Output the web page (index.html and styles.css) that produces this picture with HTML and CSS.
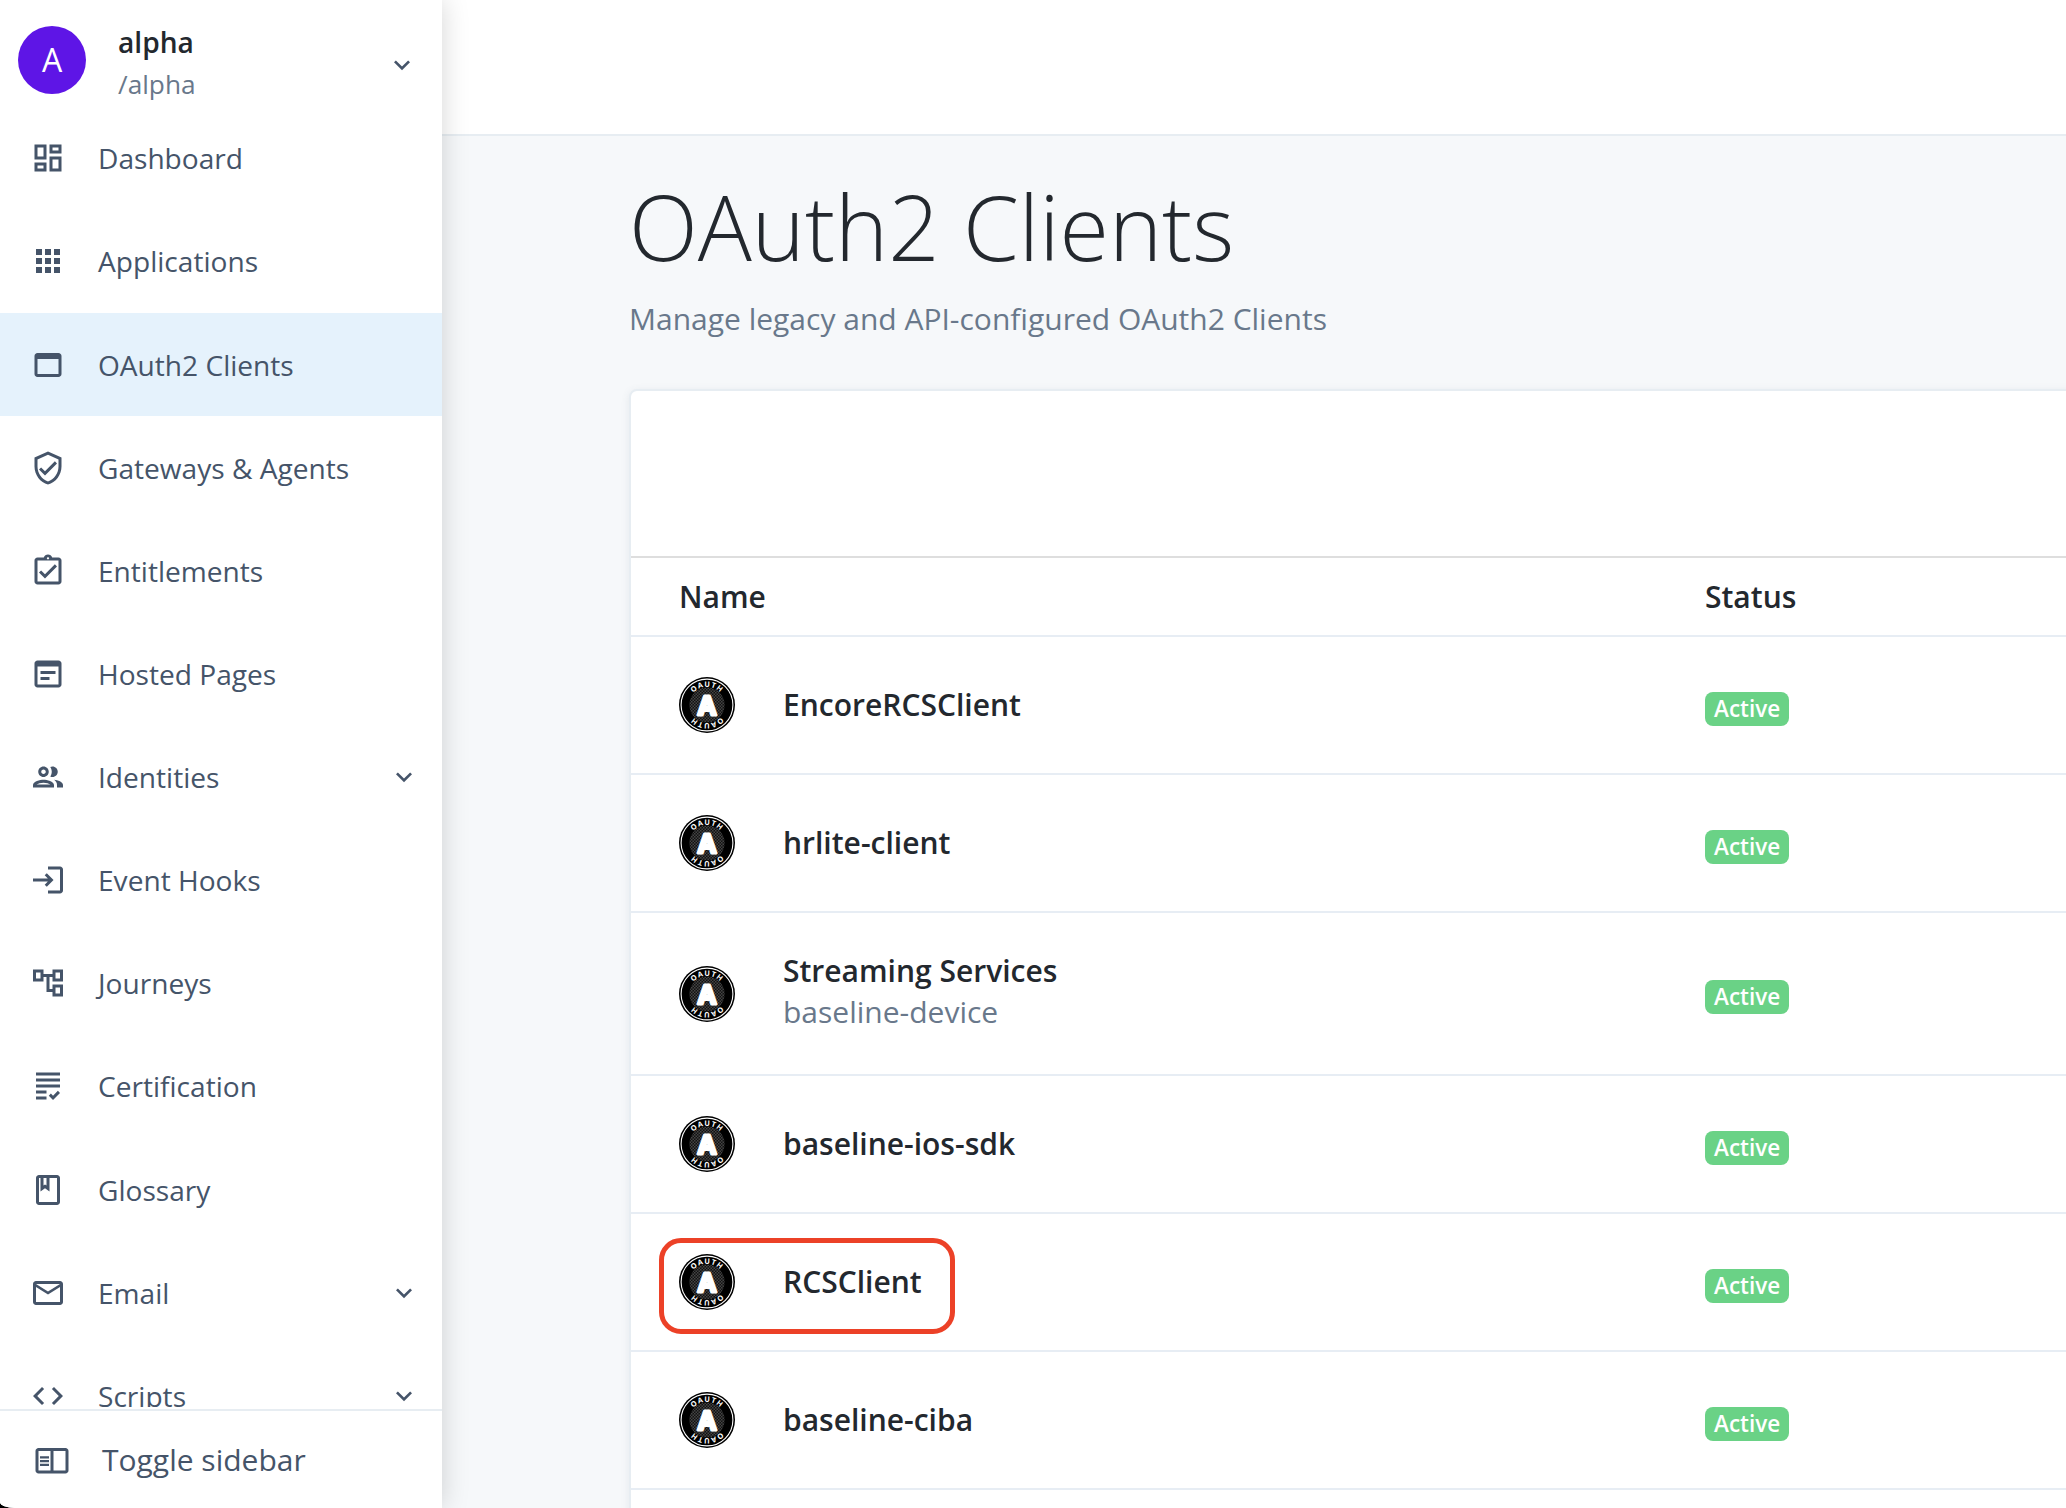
FILE: index.html
```html
<!DOCTYPE html>
<html lang="en">
<head>
<meta charset="utf-8">
<title>OAuth2 Clients</title>
<link rel="stylesheet" href="styles.css">
</head>
<body>
<svg class="defs" width="0" height="0" aria-hidden="true">
  <defs>
    <pattern id="checker" width="3" height="3" patternUnits="userSpaceOnUse">
      <rect width="3" height="3" fill="#111"/>
      <rect width="1.5" height="1.5" fill="#444"/>
      <rect x="1.5" y="1.5" width="1.5" height="1.5" fill="#444"/>
    </pattern>
    <path id="arc" d="M9.8 28a18.2 18.2 0 0 1 36.4 0"/>
    <symbol id="oauth" viewBox="0 0 56 56">
      <circle cx="28" cy="28" r="28" fill="#000"/>
      <circle cx="28" cy="28" r="25.9" fill="none" stroke="#fff" stroke-width="1.1"/>
      <circle cx="28" cy="28" r="17.6" fill="url(#checker)"/>
      <text class="seal-text"><textPath href="#arc" startOffset="50%">OAUTH</textPath></text>
      <g transform="rotate(180 28 28)"><text class="seal-text"><textPath href="#arc" startOffset="50%">OAUTH</textPath></text></g>
      <text class="seal-letter" x="28" y="38.2">A</text>
    </symbol>
    <symbol id="chevron" viewBox="0 0 24 24"><path d="M16.59 8.59 12 13.17 7.41 8.59 6 10l6 6 6-6z"/></symbol>
  </defs>
</svg>
<div class="app">
  <aside class="sidebar">
    <div class="realm">
      <div class="avatar">A</div>
      <div class="realm-text">
        <div class="realm-name">alpha</div>
        <div class="realm-path">/alpha</div>
      </div>
      <svg class="chevron"><use href="#chevron"/></svg>
    </div>
    <nav class="nav">
      <a class="item"><svg class="icon" viewBox="0 0 24 24"><path d="M19 5v2h-4V5h4M9 5v6H5V5h4m10 8v6h-4v-6h4M9 17v2H5v-2h4M21 3h-8v6h8V3zM11 3H3v10h8V3zm10 8h-8v10h8V11zm-10 4H3v6h8v-6z"/></svg><span>Dashboard</span></a>
      <a class="item"><svg class="icon" viewBox="0 0 24 24"><path d="M4 8h4V4H4v4zm6 12h4v-4h-4v4zm-6 0h4v-4H4v4zm0-6h4v-4H4v4zm6 0h4v-4h-4v4zm6-10v4h4V4h-4zm-6 4h4V4h-4v4zm6 6h4v-4h-4v4zm0 6h4v-4h-4v4z"/></svg><span>Applications</span></a>
      <a class="item active"><svg class="icon" viewBox="0 0 24 24"><path d="M19 4H5c-1.11 0-2 .9-2 2v12c0 1.1.89 2 2 2h14c1.1 0 2-.9 2-2V6c0-1.1-.89-2-2-2zm0 14H5V8h14v10z"/></svg><span>OAuth2 Clients</span></a>
      <a class="item"><svg class="icon" viewBox="0 0 24 24"><path d="M12 1 3 5v6c0 5.55 3.84 10.74 9 12 5.16-1.26 9-6.45 9-12V5l-9-4zm7 10c0 4.52-2.98 8.69-7 9.93-4.02-1.24-7-5.41-7-9.93V6.3l7-3.11 7 3.11V11zm-11.59.59L6 13l4 4 8-8-1.41-1.42L10 14.17z"/></svg><span>Gateways &amp; Agents</span></a>
      <a class="item"><svg class="icon" viewBox="0 0 24 24"><path d="M19 3h-4.18C14.4 1.84 13.3 1 12 1s-2.4.84-2.82 2H5c-1.1 0-2 .9-2 2v14c0 1.1.9 2 2 2h14c1.1 0 2-.9 2-2V5c0-1.1-.9-2-2-2zm-7-.25c.41 0 .75.34.75.75s-.34.75-.75.75-.75-.34-.75-.75.34-.75.75-.75zM19 19H5V5h14v14zM17.99 9l-1.41-1.42-6.59 6.59-2.58-2.57-1.42 1.41 4 3.99z"/></svg><span>Entitlements</span></a>
      <a class="item"><svg class="icon" viewBox="0 0 24 24"><path d="M19 3H5c-1.1 0-2 .9-2 2v14c0 1.1.9 2 2 2h14c1.1 0 2-.9 2-2V5c0-1.1-.9-2-2-2zm0 16H5V7h14v12zm-2-7H7v-2h10v2zm-4 4H7v-2h6v2z"/></svg><span>Hosted Pages</span></a>
      <a class="item"><svg class="icon" viewBox="0 0 24 24"><path d="M9 13.75c-2.34 0-7 1.17-7 3.5V19h14v-1.75c0-2.33-4.66-3.5-7-3.5zM4.34 17c.84-.58 2.87-1.25 4.66-1.25s3.82.67 4.66 1.25H4.34zM9 12c1.93 0 3.5-1.57 3.5-3.5S10.93 5 9 5 5.500 6.570 5.500 8.500 7.070 12 9 12zm0-5c.83 0 1.500.67 1.500 1.500S9.830 10 9 10s-1.500-.67-1.500-1.500S8.170 7 9 7zm7.040 6.810c1.160.84 1.960 1.960 1.960 3.440V19h4v-1.750c0-2.020-3.500-3.170-5.960-3.440zM15 12c1.930 0 3.500-1.570 3.500-3.500S16.930 5 15 5c-.54 0-1.040.13-1.500.35.63.89 1 1.980 1 3.150s-.37 2.260-1 3.150c.46.22.96.35 1.500.35z"/></svg><span>Identities</span><svg class="chevron"><use href="#chevron"/></svg></a>
      <a class="item"><svg class="icon" viewBox="0 0 24 24"><path d="M20 3h-8v2h8v14h-8v2h8c1.1 0 2-.9 2-2V5c0-1.1-.9-2-2-2zM11.200 7.500 9.800 8.900 11.900 11H2v2h9.900l-2.100 2.100 1.400 1.400L15.700 12z"/></svg><span>Event Hooks</span></a>
      <a class="item"><svg class="icon" viewBox="0 0 24 24"><path d="M22 11V3h-7v3H9V3H2v8h7V8h2v10h4v3h7v-8h-7v3h-2V8h2v3h7zM7 9H4V5h3v4zm10 6h3v4h-3v-4zm0-10h3v4h-3V5z"/></svg><span>Journeys</span></a>
      <a class="item"><svg class="icon" viewBox="0 0 24 24"><path d="M20 7H4V5h16v2zm0 2H4v2h16V9zm0 4H4v2h16v-2zM4 17h7v2H4v-2zm0 4h7v2H4v-2zM18.590 17.200l-3.240 3.240-1.410-1.410L12.530 20.440 15.350 23.270 20 18.610z" transform="translate(0 -2)"/></svg><span>Certification</span></a>
      <a class="item"><svg class="icon" viewBox="0 0 24 24"><path d="M18 2H6c-1.1 0-2 .9-2 2v16c0 1.1.9 2 2 2h12c1.100 0 2-.9 2-2V4c0-1.100-.9-2-2-2zM9 4h2v5l-1-.75L9 9V4zm9 16H6V4h1v9l3-2.250L13 13V4h5v16z"/></svg><span>Glossary</span></a>
      <a class="item"><svg class="icon" viewBox="0 0 24 24"><path d="M22 6c0-1.100-.9-2-2-2H4c-1.100 0-2 .9-2 2v12c0 1.100.9 2 2 2h16c1.100 0 2-.9 2-2V6zm-2 0-8 4.990L4 6h16zm0 12H4V8l8 5 8-5v10z"/></svg><span>Email</span><svg class="chevron"><use href="#chevron"/></svg></a>
      <a class="item"><svg class="icon" viewBox="0 0 24 24"><path d="M9.400 16.600 4.800 12l4.600-4.600L8 6l-6 6 6 6 1.400-1.400zm5.200 0 4.600-4.600-4.600-4.600L16 6l6 6-6 6-1.400-1.400z"/></svg><span>Scripts</span><svg class="chevron"><use href="#chevron"/></svg></a>
    </nav>
    <div class="toggle">
      <svg class="icon" viewBox="0 0 24 24"><path d="M21 4H3c-1.100 0-2 .9-2 2v13c0 1.100.9 2 2 2h18c1.100 0 2-.9 2-2V6c0-1.100-.9-2-2-2zM11 19H3V6h8v13zm10 0h-8V6h8v13zM4 9.500h6V11H4V9.500zM4 12h6v1.500H4V12zm0 2.500h6V16H4v-1.500z"/></svg>
      <span>Toggle sidebar</span>
    </div>
  </aside>
  <main class="main">
    <header class="topbar"></header>
    <section class="content">
      <h1 class="title">OAuth2 Clients</h1>
      <p class="subtitle">Manage legacy and API-configured OAuth2 Clients</p>
      <div class="card">
        <div class="card-toolbar"></div>
        <div class="row head"><div>Name</div><div>Status</div></div>
        <div class="row"><div class="client"><svg class="logo"><use href="#oauth"/></svg><div class="name">EncoreRCSClient</div></div><div><span class="badge">Active</span></div></div>
        <div class="row"><div class="client"><svg class="logo"><use href="#oauth"/></svg><div class="name">hrlite-client</div></div><div><span class="badge">Active</span></div></div>
        <div class="row tall"><div class="client"><svg class="logo"><use href="#oauth"/></svg><div class="stack"><div>Streaming Services</div><div class="sub">baseline-device</div></div></div><div><span class="badge">Active</span></div></div>
        <div class="row"><div class="client"><svg class="logo"><use href="#oauth"/></svg><div class="name">baseline-ios-sdk</div></div><div><span class="badge">Active</span></div></div>
        <div class="row"><div class="client marked"><svg class="logo"><use href="#oauth"/></svg><div class="name">RCSClient</div></div><div><span class="badge">Active</span></div></div>
        <div class="row"><div class="client"><svg class="logo"><use href="#oauth"/></svg><div class="name">baseline-ciba</div></div><div><span class="badge">Active</span></div></div>
        <div class="row"></div>
      </div>
    </section>
  </main>
</div>
</body>
</html>
```
FILE: styles.css
```css
*, *::after { box-sizing: border-box; }

body {
  margin: 0;
  height: 1508px;
  overflow: hidden;
  background: #000;
  font-family: "Open Sans", sans-serif;
  font-size: 30px;
  line-height: 45px;
  color: #23282e;
}

.defs { display: block; }

.app {
  display: flex;
  height: 1508px;
  overflow: hidden;
  border-bottom-left-radius: 15px 6px;
  background: #f6f8fa;
}

/* Sidebar */
.sidebar {
  position: relative;
  z-index: 1;
  display: flex;
  flex-direction: column;
  flex: none;
  width: 442px;
  background: #fff;
  color: #455469;
  box-shadow: 0 0 26px rgba(0, 0, 0, .17);
}

.realm {
  display: flex;
  flex: none;
  height: 106.75px;
  padding: 21px 24px 0 18px;
}

.avatar {
  width: 68px;
  height: 68px;
  margin-top: 5px;
  border-radius: 50%;
  background: #5e15e6;
  color: #fff;
  font-size: 32px;
  line-height: 68px;
  text-align: center;
}

.realm-text {
  flex: 1;
  margin-left: 32px;
  line-height: 42px;
}

.realm-name {
  font-size: 28.125px;
  font-weight: 600;
  color: #23282e;
}

.realm-path {
  font-size: 26.25px;
  color: #69788b;
}

.chevron {
  flex: none;
  width: 32px;
  height: 32px;
  fill: currentColor;
}

.realm .chevron { margin-top: 28px; }

.nav {
  flex: none;
  height: 1300.25px;
  overflow: hidden;
  font-size: 28.1px;
}

.item {
  display: flex;
  align-items: center;
  height: 103.125px;
  padding: 0 22px 0 30px;
}

.item span {
  flex: 1;
  margin-left: 32px;
  padding-top: 1px;
}

.active { background: #e5f2fc; }

.icon {
  flex: none;
  width: 36px;
  height: 36px;
  fill: currentColor;
}

.toggle {
  display: flex;
  align-items: center;
  gap: 32px;
  flex: 1;
  margin-top: 2px;
  padding-left: 34px;
  border-top: 2px solid #e7edf2;
}

/* Main area */
.main {
  flex: 1;
  min-width: 0;
}

.topbar {
  height: 136px;
  background: #fff;
  border-bottom: 2px solid #e7edf2;
}

.content { padding: 36px 0 0 187px; }

.title {
  margin: 0;
  font-size: 90px;
  font-weight: 300;
  line-height: 108px;
}

.subtitle {
  margin: 16px 0 48px;
  color: #69788b;
}

.card {
  width: 1500px;
  border: 2px solid #e7edf2;
  border-radius: 8px;
  background: #fff;
  box-shadow: 0 2px 8px rgba(69, 84, 105, .1);
}

.card-toolbar { height: 165px; }

.row {
  display: grid;
  grid-template-columns: 1026px 1fr;
  align-items: center;
  height: 138px;
  padding-left: 48px;
  border-bottom: 2px solid #e7edf4;
  font-weight: 600;
}

.head {
  height: 81px;
  border-top: 2px solid #dedede;
}

.tall { height: 163px; }

.client {
  display: flex;
  align-items: center;
  gap: 48px;
  position: relative;
}

.name { padding-bottom: 2px; }

.stack {
  line-height: 41px;
  margin-top: -5px;
}

.sub {
  font-weight: 400;
  color: #69788b;
}

.logo {
  width: 56px;
  height: 56px;
}

.seal-text {
  fill: #fff;
  font: 700 7.4px "Open Sans", sans-serif;
  letter-spacing: .9px;
  text-anchor: middle;
}

.seal-letter {
  fill: #fff;
  stroke: #fff;
  stroke-width: 3px;
  stroke-linejoin: round;
  font: 700 26px "Open Sans", sans-serif;
  text-anchor: middle;
}

.badge {
  display: block;
  width: max-content;
  height: 34px;
  margin-top: 8px;
  padding: 0 9px;
  border-radius: 8px;
  background: #6ad286;
  color: #fff;
  font-size: 22.5px;
  line-height: 33px;
}

.tall .badge { margin-top: 7px; }

/* Highlight frame laid over the client cell */
.marked::after {
  content: "";
  position: absolute;
  left: -20px;
  top: -16px;
  width: 296px;
  height: 96px;
  border: 5px solid #ec4127;
  border-radius: 22px;
}
```
